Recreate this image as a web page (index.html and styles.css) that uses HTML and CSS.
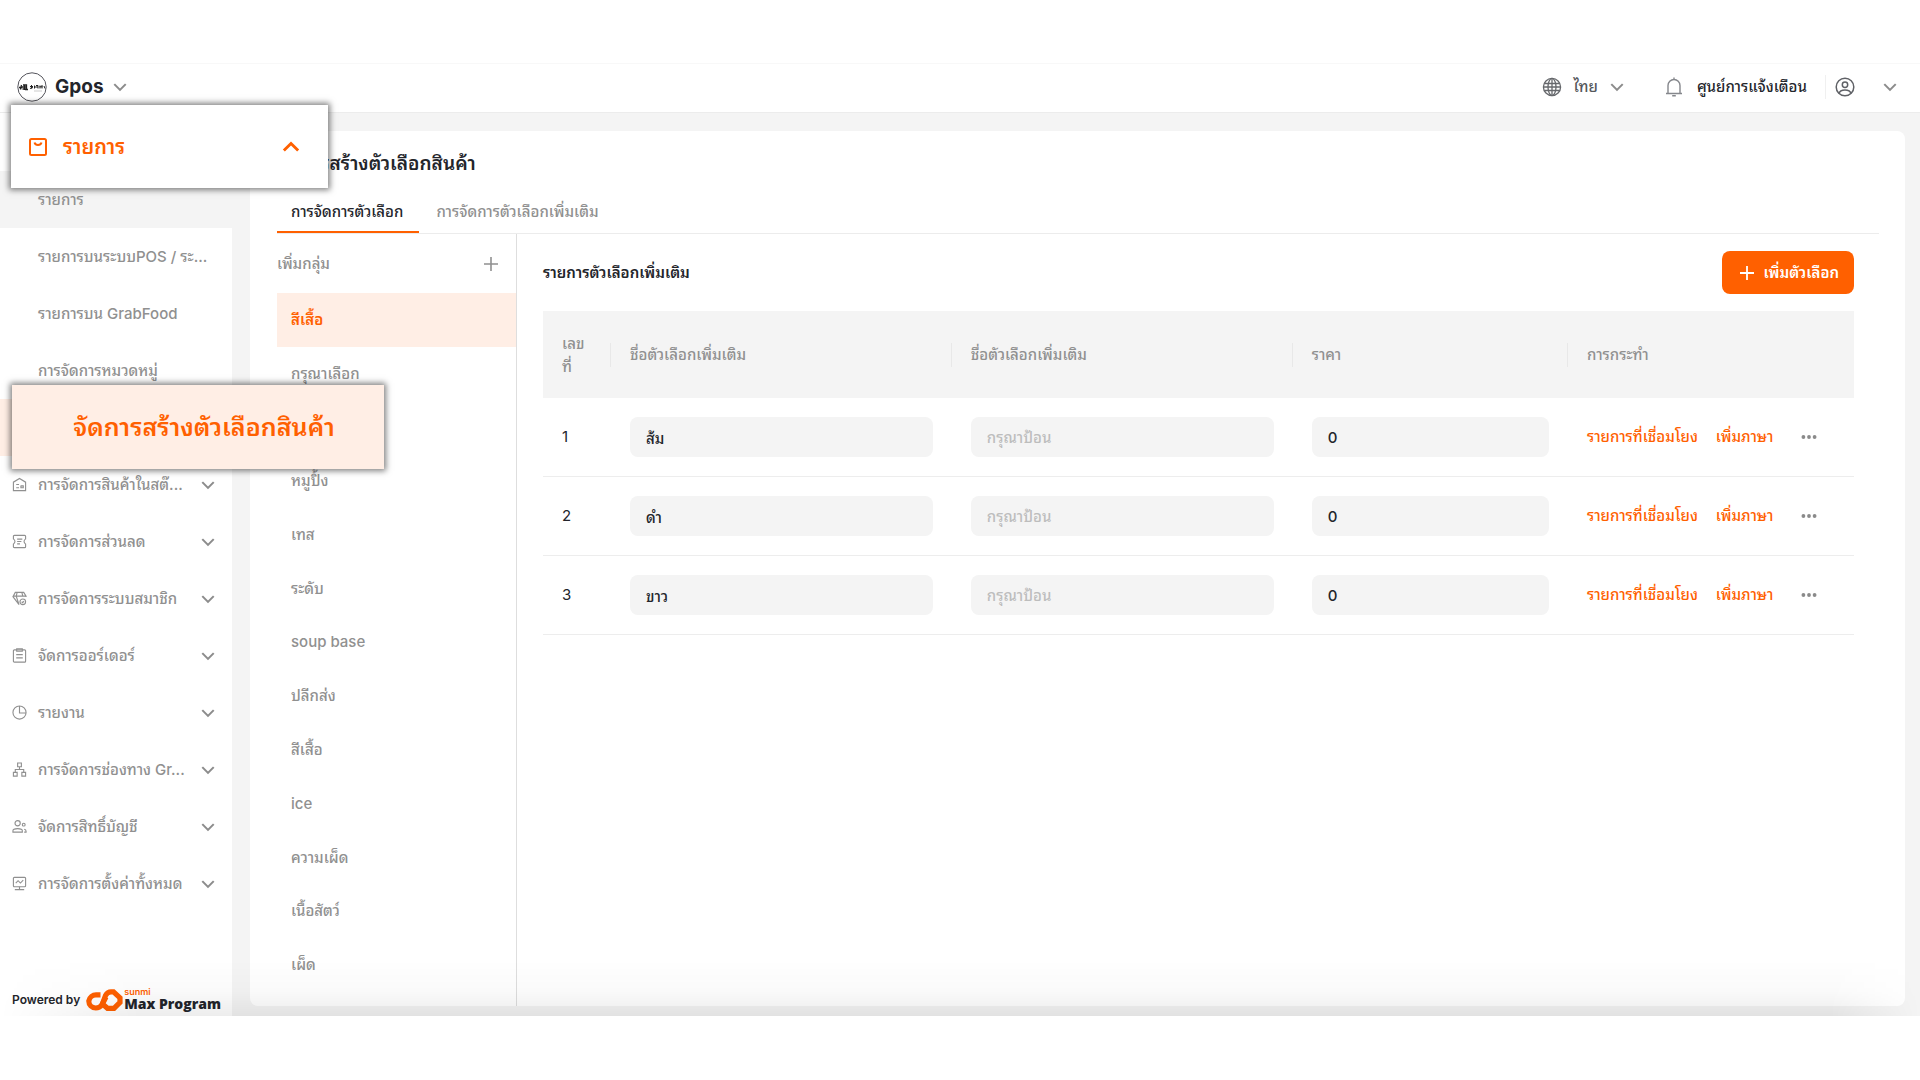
FILE: index.html
```html
<!DOCTYPE html>
<html lang="th">
<head>
<meta charset="utf-8">
<meta name="viewport" content="width=device-width, initial-scale=1">
<title>Gpos</title>
<link rel="stylesheet" href="styles.css">
</head>
<body>
<svg class="sprite" aria-hidden="true">
  <symbol id="chev" viewBox="0 0 14 14"><path d="M2 4.500l5 5 5-5"/></symbol>
  <symbol id="plus" viewBox="0 0 16 16"><path d="M8 1v14M1 8h14"/></symbol>
  <symbol id="dots" viewBox="0 0 16 6"><circle cx="2.400" cy="3" r="1.900"/><circle cx="8" cy="3" r="1.900"/><circle cx="13.600" cy="3" r="1.900"/></symbol>
</svg>
<div class="app">
  <header class="topbar">
    <button class="store" type="button">
      <svg class="store-logo" viewBox="0 0 30 30" aria-hidden="true">
        <circle cx="15" cy="15" r="14.200" fill="#fff" stroke="#55555c" stroke-width="1"/>
        <g fill="none" stroke="#222" stroke-width="1">
          <path d="M2 15.500h3M4.500 13l-1 4.500M6 13h3.500v4H5.500M7.500 12.500v5.500M5 15h5M8 17.500h3" stroke-width="1.300"/>
          <path d="M13 14.500h3M14.500 13v3.500M13 16.500l3-1M17.500 13.500v3M19 13.500h2v3M18 15h3M23 13.500v3M22.500 14.800h3M25 13v3.500M27 14l1 2.500"/>
          <path d="M17 19h8" stroke="#aaa" stroke-width=".6"/>
        </g>
      </svg>
      <span class="store-name">Gpos</span>
      <svg class="chev"><use href="#chev"/></svg>
    </button>
    <div class="tools">
      <button class="tool lang" type="button">
        <svg class="globe" viewBox="0 0 20 20" aria-hidden="true"><circle cx="10" cy="10" r="8.600"/><ellipse cx="10" cy="10" rx="4" ry="8.600"/><path d="M10 1.400v17.200M2.400 6.500h15.200M2.400 13.500h15.200M1.400 10h17.200"/></svg>
        <span>ไทย</span>
        <svg class="chev"><use href="#chev"/></svg>
      </button>
      <a class="tool notice" href="#">
        <svg class="bell" viewBox="0 0 18 20" aria-hidden="true"><path d="M3 16.200V8.500a6 6 0 0 1 12 0v7.700M1 16.500h16M9 .5v2M7.200 18.800h3.600"/></svg>
        <span>ศูนย์การแจ้งเตือน</span>
      </a>
      <button class="tool account" type="button" aria-label="บัญชี">
        <svg class="user" viewBox="0 0 20 20" aria-hidden="true"><circle cx="10" cy="10" r="8.800"/><circle cx="10" cy="7.700" r="2.700"/><path d="M4.200 16.400c.5-2.600 2.800-3.400 5.800-3.400s5.300.8 5.800 3.400"/></svg>
        <svg class="chev"><use href="#chev"/></svg>
      </button>
    </div>
  </header>

  <div class="body">
    <aside class="sidebar">
      <ul class="nav">
        <li class="row">
          <button class="callout callout-parent" type="button">
            <svg class="box" viewBox="0 0 18 18" aria-hidden="true"><rect x="1" y="1" width="16" height="16" rx="1.500"/><path d="M5.500 4.500c1 3.400 6 3.400 7 0"/></svg>
            <span>รายการ</span>
            <svg class="chev up"><use href="#chev"/></svg>
          </button>
        </li>
        <li class="row child hover"><a href="#">รายการ</a></li>
        <li class="row child"><a href="#">รายการบนระบบPOS / ระ...</a></li>
        <li class="row child"><a href="#">รายการบน GrabFood</a></li>
        <li class="row child"><a href="#">การจัดการหมวดหมู่</a></li>
        <li class="row active"><a class="callout callout-child" href="#">จัดการสร้างตัวเลือกสินค้า</a></li>
        <li class="row"><button type="button">
          <svg class="ico" viewBox="0 0 16 16" aria-hidden="true"><path d="M1.500 14.500V5.500L8 1.500l6.500 4v9zM4.500 8h3M4.500 11.500h3M9.500 9v2.500h2.500V9.500H9.500"/></svg>
          <span>การจัดการสินค้าในสต๊...</span><svg class="chev"><use href="#chev"/></svg></button></li>
        <li class="row"><button type="button">
          <svg class="ico" viewBox="0 0 16 16" aria-hidden="true"><path d="M2.500 1.500h11q1 0 1 1v2.700c-2.200 1.800-2.200 3.800 0 5.600v2.700q0 1-1 1h-11q-1 0-1-1v-2.700c2.200-1.800 2.200-3.800 0-5.600V2.500q0-1 1-1zM5.500 5.500h5.500M5.500 8h4.500M5.500 10.500h3"/></svg>
          <span>การจัดการส่วนลด</span><svg class="chev"><use href="#chev"/></svg></button></li>
        <li class="row"><button type="button">
          <svg class="ico" viewBox="0 0 16 16" aria-hidden="true"><path d="M7.500 14.500L1 6l2.500-4.500h9L15 5.500v1M1 5.500h14M5.500 1.500L4.500 5.500l3 9M10.500 1.500l1 4"/><circle cx="11.500" cy="11.500" r="3"/><path d="M10.300 11.500l1 .9 1.500-1.600"/></svg>
          <span>การจัดการระบบสมาชิก</span><svg class="chev"><use href="#chev"/></svg></button></li>
        <li class="row"><button type="button">
          <svg class="ico" viewBox="0 0 16 16" aria-hidden="true"><rect x="1.500" y="2" width="13" height="13" rx="1"/><path d="M5 .8h6v2.700H5zM4.500 7h7M4.500 10.500h7"/></svg>
          <span>จัดการออร์เดอร์</span><svg class="chev"><use href="#chev"/></svg></button></li>
        <li class="row"><button type="button">
          <svg class="ico" viewBox="0 0 16 16" aria-hidden="true"><circle cx="8" cy="8" r="7"/><path d="M8 1v7.500h7"/></svg>
          <span>รายงาน</span><svg class="chev"><use href="#chev"/></svg></button></li>
        <li class="row"><button type="button">
          <svg class="ico" viewBox="0 0 16 16" aria-hidden="true"><path d="M6 1h4v4H6zM1.500 11h4v4h-4zM10.500 11h4v4h-4zM8 5v3M3.500 11V8h9v3"/></svg>
          <span>การจัดการช่องทาง Gr...</span><svg class="chev"><use href="#chev"/></svg></button></li>
        <li class="row"><button type="button">
          <svg class="ico" viewBox="0 0 16 16" aria-hidden="true"><circle cx="6" cy="4.500" r="2.800"/><path d="M1 14v-1.500c0-3 10-3 10 0V14zM13 14h2v-1c0-1-.8-1.800-2-2"/><circle cx="12.500" cy="6" r="1.500"/></svg>
          <span>จัดการสิทธิ์บัญชี</span><svg class="chev"><use href="#chev"/></svg></button></li>
        <li class="row"><button type="button">
          <svg class="ico" viewBox="0 0 16 16" aria-hidden="true"><rect x="1.500" y="1.500" width="13" height="10" rx="1"/><path d="M4 7.500l2.500-2.500 2.500 2.500L12 4.500M8 11.500v3M3 14.500h10"/></svg>
          <span>การจัดการตั้งค่าทั้งหมด</span><svg class="chev"><use href="#chev"/></svg></button></li>
      </ul>
      <footer class="powered">
        <span>Powered by</span>
        <svg class="brand-mark" viewBox="0 0 37 22" aria-hidden="true"><g fill="none" stroke="#ff6000" stroke-width="5.200"><path d="M14.500 5.800H10.500A7.400 7.400 0 0 0 2.800 12c0 4 3 7 7 7 2.500 0 4.500-1 6-3L20 8"/><path d="M15.500 17.500L19.500 6.500C21 3.800 22.500 2.800 25 2.800h2.500l6.500 6v4.500l-6 6h-6.500L16.500 15"/></g></svg>
        <span class="brand"><small>sunmi</small><b>Max Program</b></span>
      </footer>
    </aside>

    <main class="card">
      <h1>จัดการสร้างตัวเลือกสินค้า</h1>
      <nav class="tabs">
        <a class="tab current" href="#">การจัดการตัวเลือก</a>
        <a class="tab" href="#">การจัดการตัวเลือกเพิ่มเติม</a>
      </nav>
      <div class="split">
        <section class="groups">
          <div class="groups-head"><span>เพิ่มกลุ่ม</span><button type="button" aria-label="เพิ่มกลุ่ม"><svg><use href="#plus"/></svg></button></div>
          <ul class="group-list">
            <li class="selected"><a href="#">สีเสื้อ</a></li>
            <li><a href="#">กรุณาเลือก</a></li>
            <li></li>
            <li><a href="#">หมูปิ้ง</a></li>
            <li><a href="#">เทส</a></li>
            <li><a href="#">ระดับ</a></li>
            <li><a href="#">soup base</a></li>
            <li><a href="#">ปลีกส่ง</a></li>
            <li><a href="#">สีเสื้อ</a></li>
            <li><a href="#">ice</a></li>
            <li><a href="#">ความเผ็ด</a></li>
            <li><a href="#">เนื้อสัตว์</a></li>
            <li><a href="#">เผ็ด</a></li>
          </ul>
        </section>
        <section class="options">
          <div class="options-head">
            <h2>รายการตัวเลือกเพิ่มเติม</h2>
            <button class="add" type="button"><svg><use href="#plus"/></svg><span>เพิ่มตัวเลือก</span></button>
          </div>
          <table>
            <colgroup><col class="c-no"><col class="c-name"><col class="c-name"><col class="c-price"><col></colgroup>
            <thead><tr><th>เลข<br>ที่</th><th>ชื่อตัวเลือกเพิ่มเติม</th><th>ชื่อตัวเลือกเพิ่มเติม</th><th>ราคา</th><th>การกระทำ</th></tr></thead>
            <tbody>
              <tr><td>1</td><td><input type="text" value="ส้ม" aria-label="ชื่อตัวเลือกเพิ่มเติม"></td><td><input type="text" placeholder="กรุณาป้อน" aria-label="ชื่อตัวเลือกเพิ่มเติม"></td><td><input type="text" value="0" aria-label="ราคา"></td>
                <td><div class="actions"><a href="#">รายการที่เชื่อมโยง</a><a href="#">เพิ่มภาษา</a><button type="button" aria-label="เพิ่มเติม"><svg><use href="#dots"/></svg></button></div></td></tr>
              <tr><td>2</td><td><input type="text" value="ดำ" aria-label="ชื่อตัวเลือกเพิ่มเติม"></td><td><input type="text" placeholder="กรุณาป้อน" aria-label="ชื่อตัวเลือกเพิ่มเติม"></td><td><input type="text" value="0" aria-label="ราคา"></td>
                <td><div class="actions"><a href="#">รายการที่เชื่อมโยง</a><a href="#">เพิ่มภาษา</a><button type="button" aria-label="เพิ่มเติม"><svg><use href="#dots"/></svg></button></div></td></tr>
              <tr><td>3</td><td><input type="text" value="ขาว" aria-label="ชื่อตัวเลือกเพิ่มเติม"></td><td><input type="text" placeholder="กรุณาป้อน" aria-label="ชื่อตัวเลือกเพิ่มเติม"></td><td><input type="text" value="0" aria-label="ราคา"></td>
                <td><div class="actions"><a href="#">รายการที่เชื่อมโยง</a><a href="#">เพิ่มภาษา</a><button type="button" aria-label="เพิ่มเติม"><svg><use href="#dots"/></svg></button></div></td></tr>
            </tbody>
          </table>
        </section>
      </div>
    </main>
  </div>
</div>
</body>
</html>
```
FILE: styles.css
```css
:root {
  --orange: #ff6000;
  --peach: #ffeee5;
  --gray: #f4f4f4;
  --muted: #909090;
  --ink: #23252b;
}
* { box-sizing: border-box; }
body {
  margin: 0;
  min-height: 100vh;
  padding: 63px 0 64px;
  display: flex;
  flex-direction: column;
  background: #fff;
  color: var(--ink);
  font: 500 15px/24px Inter, "Noto Sans Thai Looped", "Noto Sans Thai", "Noto Sans", sans-serif;
}
ul { list-style: none; margin: 0; padding: 0; }
h1, h2 { margin: 0; }
a { color: inherit; text-decoration: none; }
button { font: inherit; color: inherit; background: none; border: 0; padding: 0; cursor: pointer; }
svg { flex: none; fill: none; stroke: currentColor; }
.sprite { display: none; }
.chev { width: 16px; height: 16px; color: #8c8c8c; stroke-width: 1.8; }

.app { flex: 1; display: flex; flex-direction: column; position: relative; background: var(--gray); border-top: 1px solid #f8f8f8; }
/* soft shade along the lower edge */
.app::after {
  content: "";
  position: absolute;
  left: 0; right: 0; bottom: 0;
  height: 56px;
  background: linear-gradient(to top, rgba(0,0,0,.07), rgba(0,0,0,.02) 45%, transparent);
  -webkit-mask: linear-gradient(to right, transparent, #000 140px, #000 calc(100% - 90px), transparent);
  mask: linear-gradient(to right, transparent, #000 140px, #000 calc(100% - 90px), transparent);
  pointer-events: none;
}

.topbar { display: flex; justify-content: space-between; align-items: center; height: 49px; padding: 0 22px 2px 17px; background: #fff; border-bottom: 1px solid #ececec; }
.store { display: flex; align-items: center; gap: 8px; }
.store-logo { width: 30px; height: 30px; }
.store-name { font-size: 19px; font-weight: 700; }
.tools { display: flex; align-items: center; }
.tool { display: flex; align-items: center; }
.lang { gap: 11px; color: #55575c; }
.globe { width: 20px; height: 20px; color: #66686c; stroke-width: 1.3; }
.notice { gap: 14px; margin-left: 40px; padding-right: 18px; border-right: 1px solid #f0f0f0; }
.bell { width: 18px; height: 20px; color: #85878c; stroke-width: 1.4; }
.account { gap: 27px; margin-left: 9px; }
.user { width: 20px; height: 20px; color: #5f6166; stroke-width: 1.5; }

.body { flex: 1; display: flex; gap: 18px; padding-right: 15px; }
.sidebar { width: 232px; flex: none; display: flex; flex-direction: column; background: #fff; color: var(--muted); }
.nav { padding-top: 1px; }
.row { height: 57px; display: flex; align-items: center; padding: 0 16px 0 12px; position: relative; }
.row > button:not(.callout) { flex: 1; display: flex; align-items: center; gap: 11px; text-align: left; }
.row button span { flex: 1; white-space: nowrap; }
.row.child { padding-left: 38px; }
.row.hover { background: var(--gray); }
.row.active { background: var(--peach); }
.ico { width: 15px; height: 15px; stroke-width: 1.2; }
.callout { position: absolute; z-index: 2; color: var(--orange); box-shadow: 0 0 6px 2px rgba(0,0,0,.5); font-weight: 600; display: flex; align-items: center; }
.callout-parent { left: 11px; top: -9px; width: 317px; height: 83px; padding: 0 27px 0 18px; background: #fff; font-size: 20px; gap: 16px; text-align: left; }
.callout-parent .chev { color: var(--orange); width: 20px; height: 20px; stroke-width: 2; }
.box { width: 18px; height: 18px; stroke-width: 2; }
.up { transform: rotate(180deg); }
.callout-child { left: 12px; top: -14px; width: 372px; height: 84px; padding-left: 12px; justify-content: center; background: var(--peach); font-size: 25px; line-height: 40px; }
.powered { display: flex; align-items: center; gap: 6px; margin-top: auto; padding: 0 0 4px 12px; color: var(--ink); font: 600 12px/16px Inter, sans-serif; white-space: nowrap; }
.brand-mark { width: 37px; height: 22px; }
.brand { display: flex; flex-direction: column; margin-left: -5px; }
.brand small { color: var(--orange); font-size: 9px; line-height: 8px; }
.brand b { font: 800 14px/16px "Open Sans", sans-serif; }

.card { flex: 1; min-width: 0; display: flex; flex-direction: column; margin: 18px 0 10px; padding: 17px 26px 0 27px; background: #fff; border-radius: 8px; }
h1 { font-size: 19px; line-height: 32px; font-weight: 600; }
.tabs { display: flex; gap: 3px; margin-top: 11px; border-bottom: 1px solid #ececec; color: var(--muted); }
.tab { padding: 9px 16px 9px 14px; height: 42px; border-bottom: 2px solid transparent; }
.tab.current { color: var(--ink); border-color: var(--orange); }
.split { flex: 1; display: flex; }
.groups { width: 240px; flex: none; display: flex; flex-direction: column; padding-bottom: 14px; border-right: 1px solid #dedede; color: var(--muted); }
.groups-head { display: flex; justify-content: space-between; align-items: center; height: 59px; padding-right: 17px; }
.groups-head svg { display: block; width: 16px; height: 16px; stroke-width: 1.6; }
.group-list { flex: 1; display: grid; grid-auto-rows: 1fr; }
.group-list li { display: flex; align-items: center; padding-left: 14px; }
.group-list .selected { background: var(--peach); color: var(--orange); font-weight: 600; }
.options { flex: 1; min-width: 0; padding: 17px 25px 0 26px; }
.options-head { display: flex; justify-content: space-between; align-items: center; margin-bottom: 17px; }
h2 { font-size: 15px; line-height: 24px; font-weight: 600; }
.add { display: flex; align-items: center; gap: 9px; height: 43px; padding: 0 15px 0 17px; background: var(--orange); color: #fff; border-radius: 8px; font-weight: 600; }
.add svg { width: 16px; height: 16px; stroke-width: 1.8; }

table { width: 100%; table-layout: fixed; border-collapse: separate; border-spacing: 0; }
.c-no { width: 68px; }
.c-name { width: 26%; }
.c-price { width: 21%; }
th { height: 87px; padding: 0 19px; text-align: left; font-weight: 500; line-height: 23px; color: var(--muted); background: var(--gray) linear-gradient(#e8e8e8, #e8e8e8) no-repeat right center / 1px 24px; }
th:last-child { background: var(--gray); }
td { height: 79px; padding: 0 19px; border-bottom: 1px solid #ededed; }
td:first-child { font-weight: 400; }
input { display: block; width: 100%; height: 40px; padding: 0 16px; border: 0; border-radius: 8px; background: var(--gray); font: inherit; color: inherit; }
input::placeholder { color: #bdbdbd; opacity: 1; }
.actions { display: flex; align-items: center; gap: 18px; color: var(--orange); white-space: nowrap; }
.actions button { margin-left: 10px; color: #8a8a8a; }
.actions svg { display: block; width: 16px; height: 6px; fill: currentColor; stroke: none; }
```
